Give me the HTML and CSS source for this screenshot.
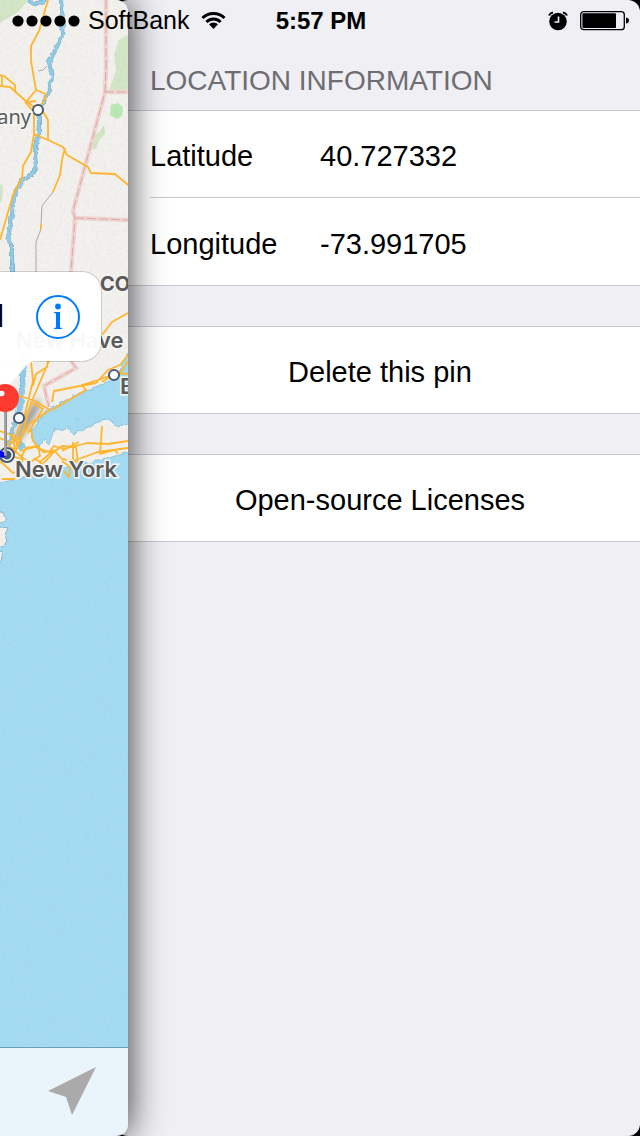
FILE: index.html
```html
<!DOCTYPE html>
<html lang="en">
<head>
<meta charset="utf-8">
<meta name="viewport" content="width=device-width, initial-scale=1">
<title>Location Information</title>
<link rel="stylesheet" href="styles.css">
</head>
<body>
<header class="status">
  <div class="status-left">
    <svg class="signal" width="68" height="12" viewBox="0 0 68 12" role="img" aria-label="Signal"><circle cx="6" cy="6" r="5.6"/><circle cx="20" cy="6" r="5.6"/><circle cx="34" cy="6" r="5.6"/><circle cx="48" cy="6" r="5.6"/><circle cx="62" cy="6" r="5.6"/></svg>
    <span class="carrier">SoftBank</span>
    <svg width="25" height="19" viewBox="0 0 25 19" role="img" aria-label="Wi-Fi"><path d="M1.500 7a15.500 15.500 0 0 1 22 0M5.400 11a10 10 0 0 1 14.200 0" fill="none" stroke="#000" stroke-width="3"/><path d="M8 13.300a6.400 6.400 0 0 1 9 0l-4.500 4.700z"/></svg>
  </div>
  <time class="clock">5:57 PM</time>
  <div class="status-right">
    <svg width="20" height="20" viewBox="0 0 20 20" role="img" aria-label="Alarm"><circle cx="10" cy="10.500" r="8.800"/><path d="M1 4.500q1-2.500 4-3M19 4.500q-1-2.500-4-3" fill="none" stroke="#000" stroke-width="2"/><path d="M10.500 5.500v5.500H6.500" fill="none" stroke="#efeff4" stroke-width="1.600"/></svg>
    <svg width="50" height="20" viewBox="0 0 50 20" role="img" aria-label="Battery"><rect x=".7" y=".7" width="43.600" height="18" rx="3" fill="none" stroke="#000" stroke-width="1.300"/><rect x="2.400" y="2.300" width="33.600" height="14.800" rx="1"/><path d="M46 6.500q3 .5 3 3t-3 3z"/></svg>
  </div>
</header>
<div class="screen">
  <section class="map-pane" aria-label="Map">
    <div class="map">
      <svg class="map-art" viewBox="0 0 128 1048" preserveAspectRatio="xMinYMin slice" aria-hidden="true">
        <defs>
          <filter id="grain" x="0" y="0" width="100%" height="100%"><feTurbulence type="fractalNoise" baseFrequency=".3" numOctaves="2"/><feColorMatrix values="0 0 0 0 .4  0 0 0 0 .45  0 0 0 0 .45  0 0 0 1.200 -.5"/></filter>
          <filter id="rough" x="-10%" y="-5%" width="120%" height="110%"><feTurbulence type="fractalNoise" baseFrequency=".16" numOctaves="2"/><feDisplacementMap in="SourceGraphic" scale="5" xChannelSelector="R" yChannelSelector="G"/></filter>
          <filter id="soft" x="-50%" y="-50%" width="200%" height="200%"><feGaussianBlur stdDeviation="3"/></filter>
        </defs>
        <rect width="128" height="1048" fill="#f3f1ee"/>
        <g fill="#d3e6c6"><path d="M0 0H29L18 12 0 23zM128 35l-9 5-5 15 2 15-7 21h19zM104 125l-5 7-5 4-3 14 5-1 4-10 5-5zM0 184l3 2-1 14-2 3z"/><path fill="#b9e9b3" d="M111 105l7-2 5 4-1 9-5 3-7-4z"/></g>
        <g fill="none" stroke="#f1d5d1" stroke-width="4.500"><path d="M106 0v70l-1 22-32 119 2 7-4 55M105 92h23M75 218l53 2M71 361l5 7-32 18 5 21"/><path stroke="#dda7a3" stroke-width="1" stroke-dasharray="9 3" d="M106 0v70l-1 22-32 119 2 7-4 55M105 92h23M75 218l53 2M71 361l5 7-32 18 5 21"/></g>
        <g filter="url(#rough)">
          <g fill="none" stroke="#7fa3b5" stroke-width="4"><path d="M28 0l7 4 6-2 6-2M61 0l2 20-1 16-8 17-5 9 3 15-4 17-9 16v20l-4 23 1 13-5 9-10 6-7 16-3 25-3 16 4 8v30M24 355l-3 35-4 25-9 30"/><path stroke="#8dcdec" stroke-width="3" d="M28 0l7 4 6-2 6-2M61 0l2 20-1 16-8 17-5 9 3 15-4 17-9 16v20l-4 23 1 13-5 9-10 6-7 16-3 25-3 16 4 8v30M24 355l-3 35-4 25-9 30"/></g>
          <path d="M24 358l-3 32-4 24 5 2 3-24 2-32z" fill="#8fcbe5"/>
          <path d="M132 350l-9 12-4 14-19 9-20 8-18 9-12 8-8 4-6 12-6 4 2 10 7 8 5-8 5 5 5-16 8 2 5-5 6 8 12-5 16-8 9-1 8 8 16-7z" fill="#a3dbf2" stroke="#8fc3d8"/>
          <path d="M-5 484l28-6 25-9 30-4 24-5 30-9V1053H-5z" fill="#a3dbf2" stroke="#8fc3d8"/>
          <path d="M16 443l6-4 4 8-6 5zM74 420l6-1 1 1-5 1z" fill="#8fcbe5"/>
          <path d="M-3 511l9 4v5l-9 4zM-3 527l10 2-2 16-8 2zM-3 553l6-2-2 10-4 4z" fill="#f3f1ee" stroke="#8fb4c3"/>
        </g>
        <path d="M14 440l12-26 12-16 2 8-10 18-11 18z" fill="#353b36" opacity=".5" filter="url(#soft)"/>
        <rect width="128" height="1048" filter="url(#grain)" opacity=".18"/>
        <g fill="none" stroke="#ffb52e" stroke-width="1.800" stroke-linejoin="round"><path d="M48 0l-9 31-8 15v15l5 29-10 12M0 75l4 1 11 9v6M2 76v9M0 86l10 1 17 15 11 8M36 90l10 4-1 6-8 10M27 102l9-1M25 102l9 10v22l-3 18-8 14-1 12-9 17-13 45M42 110l6 10v20M34 134l14 6 15 7 4 8 21 12 3 6 24 1 13 11M65 148l-3 12-2 15-7 17M41 224v5M102 335l10-13 16-9M31 361l2 20-8 33-12 28M48 361l-1 6-11 7-3 12M49 361l-18 42-12 42M17 395l18 6 15 9-21 14-13 22M32 403l11 6-15 24M52 402l2-11 26-5 16-3 12-13 12-5 8-10M128 361l-7 11-23 8-16 5 4 5-34 20M128 374l-12-1-14 9M0 431l14 5 4 10-5 10 7 3 6-11 12-2 2 10-8 5-12-3M0 438l12 5 9-7M20 451l15-4 14 5 5-6 10 3 23-6 21 1 20-3M31 429l2 12 10 11 12-1 7-5 14 1 2 15-16-3-8-9-14 12v9l-10 6M12 436l3 12-15 5M5 442l18 16-3 12 12-1M73 442v24M62 451l17-9M102 426l-2 28 15-4 3 4M55 451l-12 13-9-6M62 461l8 6-1 10-5-6M0 461l13 12 9-4M2 479h12l4-3M73 461l25-9 30-4"/></g>
        <path d="M53 192l-11 14-1 18M41 229l-5 13v31M38 71l5-1 4-4" fill="none" stroke="#a8a8a5"/>
        <g fill="#fff" stroke="#455a70" stroke-width="2"><circle cx="38" cy="110" r="5"/><circle cx="114" cy="375" r="5"/><circle cx="19" cy="418" r="5"/><circle cx="7" cy="455" r="7"/><circle cx="7" cy="455" r="3.500" fill="#455a70"/></g>
        <g class="map-labels"><text x="31" y="124" text-anchor="end" class="minor">any</text><text x="100" y="291" class="state">CO</text><text x="16" y="348">New Have</text><text x="120" y="394">B</text><text x="15" y="477">New York</text></g>
        <path d="M-2 450l6 2 3 3-4 3-5-2z" fill="#00f"/>
      </svg>
      <div class="callout">
        <span class="callout-title">l</span>
        <button class="info" type="button" aria-label="Information">
          <svg width="44" height="44" viewBox="0 0 44 44" aria-hidden="true"><circle cx="22" cy="22" r="21" fill="none" stroke="#007aff" stroke-width="2"/><circle cx="22" cy="11.500" r="2.900" fill="#007aff"/><path d="M18 17h6v15.500l2 .5v1h-8v-1l2-.5v-14l-2-.5z" fill="#007aff"/></svg>
        </button>
      </div>
      <svg class="pointer" width="34" height="30" viewBox="0 0 34 30" aria-hidden="true"><path d="M0 0h34q-4 1-8 5L13 20Q7 27 0 22z" fill="#fff" fill-opacity=".96"/></svg>
      <svg class="pin" width="22" height="76" viewBox="0 0 22 76" aria-hidden="true"><path d="M5.500 25v47" stroke="#85888e" stroke-width="3"/><path d="M5 25v46" stroke="#c0c2c7"/><circle cx="5" cy="14" r="14" fill="#ff3b30"/><ellipse cx="1.500" cy="9.500" rx="3" ry="2.700" fill="#fff"/></svg>
    </div>
    <footer class="toolbar">
      <button class="locate" type="button" aria-label="Current location"><svg width="48" height="48" viewBox="0 0 48 48" aria-hidden="true"><path d="M48 0L24 48 18 30 0 24z" fill="#aaa"/></svg></button>
    </footer>
  </section>
  <main class="panel">
    <h1 class="heading">LOCATION INFORMATION</h1>
    <dl class="group">
      <div class="row"><dt>Latitude</dt><dd>40.727332</dd></div>
      <div class="row"><dt>Longitude</dt><dd>-73.991705</dd></div>
    </dl>
    <button class="action" type="button">Delete this pin</button>
    <button class="action" type="button">Open-source Licenses</button>
  </main>
</div>
</body>
</html>
```
FILE: styles.css
```css
* { box-sizing: border-box; }
body { margin: 0; background: #000; color: #000; font-family: "Liberation Sans", Arial, sans-serif; }
button { margin: 0; border: 0; padding: 0; background: none; color: inherit; font: inherit; }
svg { display: block; }

.status { position: absolute; inset: 0 0 auto; z-index: 3; display: grid; grid-template-columns: 1fr auto 1fr; align-items: center; height: 41px; padding: 0 10px 0 12px; }
.status-left, .status-right { display: flex; align-items: center; }
.status-left { gap: 8px; }
.carrier { margin-right: 4px; font-size: 25px; }
.clock { font-size: 24px; font-weight: bold; }
.status-right { justify-content: flex-end; gap: 12px; }

.screen { display: grid; grid-template-columns: 20% 1fr; min-height: 100vh; overflow: hidden; }
.map-pane { position: relative; z-index: 1; display: flex; flex-direction: column; border-radius: 0 12px 12px 0; box-shadow: 0 0 36px rgba(0, 0, 0, .8); }
.map { position: relative; flex: 1; overflow: hidden; border-top-right-radius: 12px; background: #a3dbf2; }
.map-art { position: absolute; inset: 0; width: 100%; height: 100%; }
.map-labels { fill: #5a5a5a; stroke: #f5f5f2; stroke-width: 3px; paint-order: stroke; font: 600 22px Inter, sans-serif; }
.map-labels .minor { font: 20px "Noto Sans", sans-serif; }
.map-labels .state { font-size: 20px; font-weight: 700; }

.callout { position: absolute; top: 271px; left: 0; right: 20%; display: flex; align-items: center; justify-content: space-between; height: 91px; padding-right: 21px; border: 1px solid rgba(0, 0, 0, .15); border-left: 0; border-radius: 0 20px 20px 0; background: rgba(255, 255, 255, .96); background-clip: padding-box; }
.callout-title { display: flex; justify-content: flex-end; width: 4px; font-size: 32px; }
.pointer { position: absolute; top: 361px; left: 0; }
.pin { position: absolute; top: 384px; left: 0; }

.toolbar { display: flex; align-items: center; justify-content: flex-end; height: 89px; padding: 0 32px 2px 0; border-top: 1px solid #6b9fba; border-bottom-right-radius: 12px; background: #eaf5fb; }

.panel { margin-left: -12px; padding-left: 12px; border-radius: 12px; background: #efeff4; font-size: 29px; line-height: 32px; }
.heading { margin: 0; height: 110px; padding: 65px 22px 0; color: #6d6d72; font-size: 28px; font-weight: normal; }
.group { margin: 0 0 40px -12px; padding-left: 34px; border: solid #c8c7cc; border-width: 1px 0; background: #fff; }
.row { display: grid; grid-template-columns: 170px 1fr; align-items: center; height: 86px; padding-top: 4px; }
.row + .row { height: 88px; border-top: 1px solid #c8c7cc; }
.row dd { margin: 0; }
.action { display: block; width: calc(100% + 12px); height: 88px; margin: 0 0 40px -12px; padding: 4px 8px 0 12px; border: solid #c8c7cc; border-width: 1px 0; background: #fff; text-align: center; }
```
